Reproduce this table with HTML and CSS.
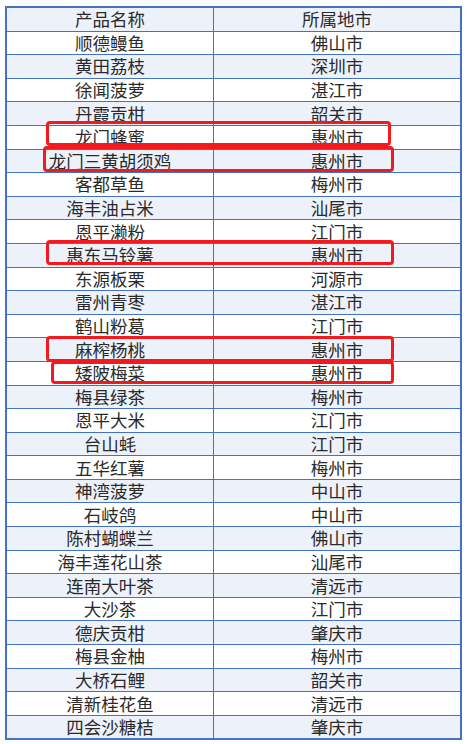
FILE: index.html
```html
<!DOCTYPE html>
<html lang="zh">
<head>
<meta charset="utf-8">
<link rel="stylesheet" href="styles.css">
</head>
<body>
<div class="wrap">
<table class="tbl">
<tr class="alt"><td>产品名称</td><td>所属地市</td></tr>
<tr><td>顺德鳗鱼</td><td>佛山市</td></tr>
<tr class="alt"><td>黄田荔枝</td><td>深圳市</td></tr>
<tr><td>徐闻菠萝</td><td>湛江市</td></tr>
<tr class="alt"><td>丹霞贡柑</td><td>韶关市</td></tr>
<tr><td>龙门蜂蜜</td><td>惠州市</td></tr>
<tr class="alt"><td>龙门三黄胡须鸡</td><td>惠州市</td></tr>
<tr><td>客都草鱼</td><td>梅州市</td></tr>
<tr class="alt"><td>海丰油占米</td><td>汕尾市</td></tr>
<tr><td>恩平濑粉</td><td>江门市</td></tr>
<tr class="alt"><td>惠东马铃薯</td><td>惠州市</td></tr>
<tr><td>东源板栗</td><td>河源市</td></tr>
<tr class="alt"><td>雷州青枣</td><td>湛江市</td></tr>
<tr><td>鹤山粉葛</td><td>江门市</td></tr>
<tr class="alt"><td>麻榨杨桃</td><td>惠州市</td></tr>
<tr><td>矮陂梅菜</td><td>惠州市</td></tr>
<tr class="alt"><td>梅县绿茶</td><td>梅州市</td></tr>
<tr><td>恩平大米</td><td>江门市</td></tr>
<tr class="alt"><td>台山蚝</td><td>江门市</td></tr>
<tr><td>五华红薯</td><td>梅州市</td></tr>
<tr class="alt"><td>神湾菠萝</td><td>中山市</td></tr>
<tr><td>石岐鸽</td><td>中山市</td></tr>
<tr class="alt"><td>陈村蝴蝶兰</td><td>佛山市</td></tr>
<tr><td>海丰莲花山茶</td><td>汕尾市</td></tr>
<tr class="alt"><td>连南大叶茶</td><td>清远市</td></tr>
<tr><td>大沙茶</td><td>江门市</td></tr>
<tr class="alt"><td>德庆贡柑</td><td>肇庆市</td></tr>
<tr><td>梅县金柚</td><td>梅州市</td></tr>
<tr class="alt"><td>大桥石鲤</td><td>韶关市</td></tr>
<tr><td>清新桂花鱼</td><td>清远市</td></tr>
<tr class="alt"><td>四会沙糖桔</td><td>肇庆市</td></tr>
</table>
<div class="mark m1"></div>
<div class="mark m2"></div>
<div class="mark m3"></div>
<div class="mark m4"></div>
<div class="mark m5"></div>
</div>
</body>
</html>
```
FILE: styles.css
```css
html, body {
  margin: 0;
  padding: 0;
  background: #ffffff;
}
.wrap {
  position: relative;
  padding: 6px 0 0 5px;
}
.tbl {
  border-collapse: collapse;
  width: 457px;
  table-layout: fixed;
  border: 2px solid #4472c4;
  font-family: "Noto Sans CJK SC", "Noto Sans", sans-serif;
  font-size: 17.5px;
  color: #2a2a2a;
}
.tbl td {
  border: 1px solid #4472c4;
  height: 22.6px;
  padding: 0;
  text-align: center;
  line-height: 20px;
  vertical-align: middle;
}
.tbl td:first-child {
  width: 206px;
}
.tbl tr.alt td {
  background: #edf1f9;
}
.mark {
  position: absolute;
  border: 3px solid #f5191e;
  border-radius: 4px;
  box-sizing: border-box;
}
.m1 { left: 46px; top: 121px; width: 345px; height: 25px; }
.m2 { left: 43px; top: 146px; width: 351px; height: 26px; }
.m3 { left: 46px; top: 240px; width: 348px; height: 25px; }
.m4 { left: 46px; top: 336px; width: 348px; height: 26px; }
.m5 { left: 51px; top: 361px; width: 343px; height: 23px; }
```
